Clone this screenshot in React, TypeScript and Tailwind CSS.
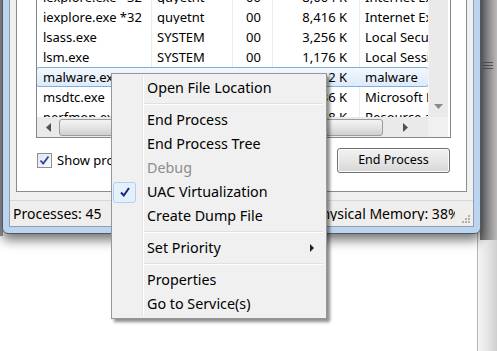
import React from 'react';

type Row = {
  name: string;
  user: string;
  cpu: string;
  mem: string;
  desc: string;
  selected?: boolean;
};

const rows: Row[] = [
  { name: 'iexplore.exe *32', user: 'quyetnt', cpu: '00', mem: '8,604 K', desc: 'Internet Explorer' },
  { name: 'iexplore.exe *32', user: 'quyetnt', cpu: '00', mem: '8,416 K', desc: 'Internet Explorer' },
  { name: 'lsass.exe', user: 'SYSTEM', cpu: '00', mem: '3,256 K', desc: 'Local Security Authority Process' },
  { name: 'lsm.exe', user: 'SYSTEM', cpu: '00', mem: '1,176 K', desc: 'Local Session Manager Service' },
  { name: 'malware.exe', user: 'quyetnt', cpu: '00', mem: '1,112 K', desc: 'malware', selected: true },
  { name: 'msdtc.exe', user: 'NETWORK...', cpu: '00', mem: '2,436 K', desc: 'Microsoft Distributed Transaction' },
  { name: 'perfmon.exe', user: 'quyetnt', cpu: '00', mem: '6,148 K', desc: 'Resource and Performance Monitor' },
];

type MenuItem =
  | { kind: 'sep' }
  | { kind: 'item'; label: string; disabled?: boolean; checked?: boolean; submenu?: boolean };

const menu: MenuItem[] = [
  { kind: 'item', label: 'Open File Location' },
  { kind: 'sep' },
  { kind: 'item', label: 'End Process' },
  { kind: 'item', label: 'End Process Tree' },
  { kind: 'item', label: 'Debug', disabled: true },
  { kind: 'item', label: 'UAC Virtualization', checked: true },
  { kind: 'item', label: 'Create Dump File' },
  { kind: 'sep' },
  { kind: 'item', label: 'Set Priority', submenu: true },
  { kind: 'sep' },
  { kind: 'item', label: 'Properties' },
  { kind: 'item', label: 'Go to Service(s)' },
];

const ProcessRow: React.FC<{ row: Row }> = ({ row }) => (
  <div
    className={
      row.selected
        ? 'grid grid-cols-[114px_81px_40px_87px_80px] h-5 items-center border border-[#84acdd] rounded-[3px] bg-gradient-to-b from-[#f2f7fd] to-[#dceafa] -mx-px'
        : 'grid grid-cols-[114px_81px_40px_87px_80px] h-5 items-center border border-transparent -mx-px'
    }
  >
    <span className="pl-[6px] whitespace-nowrap overflow-hidden">{row.name}</span>
    <span className="pl-[6px] whitespace-nowrap overflow-hidden">{row.user}</span>
    <span className="pl-[14px] whitespace-nowrap overflow-hidden">{row.cpu}</span>
    <span className="pr-[12px] text-right whitespace-nowrap overflow-hidden">{row.mem}</span>
    <span className="pl-[6px] whitespace-nowrap overflow-hidden">{row.desc}</span>
  </div>
);

const ContextMenu: React.FC = () => (
  <div className="absolute left-[111px] top-[73px] w-[216px] border border-[#979797] bg-[#f0f0f0] p-[2px] text-[14.3px] shadow-[3px_3px_3px_rgba(0,0,0,0.45)]">
    <div className="relative">
      {/* gutter line */}
      <div className="absolute left-[28px] top-0 bottom-0 w-[2px] border-l border-[#e2e3e3] bg-white" />
      {menu.map((m, i) =>
        m.kind === 'sep' ? (
          <div key={i} className="h-2 flex items-center pl-[30px] pr-[1px]">
            <div className="h-[2px] w-full border-t border-[#e0e0e0] bg-white" />
          </div>
        ) : (
          <div key={i} className="relative h-6 flex items-center">
            <div className="w-[28px] h-6 flex items-center justify-start">
              {m.checked && (
                <div className="w-[23px] h-[21px] ml-[-1px] rounded-[3px] border border-[#aecff7] bg-[#e6f0fb] flex items-center justify-center">
                  <svg width="12" height="12" viewBox="0 0 12 12">
                    <path d="M2 6.5 L4.8 9.5 L10 2" fill="none" stroke="#14287e" strokeWidth="2" />
                  </svg>
                </div>
              )}
            </div>
            <span className={m.disabled ? 'pl-[5px] pt-px text-[#8d8d8d]' : 'pl-[5px] pt-px text-black'}>{m.label}</span>
            {m.submenu && (
              <svg className="absolute right-[10px] top-[8px]" width="4" height="8" viewBox="0 0 4 8">
                <path d="M0 0 L4 4 L0 8 Z" fill="#222" />
              </svg>
            )}
          </div>
        )
      )}
    </div>
  </div>
);

const App: React.FC = () => {
  return (
    <div className="relative w-[497px] h-[351px] overflow-hidden bg-white text-[13px] leading-none text-black font-['Segoe_UI','Noto_Sans',sans-serif]">
      {/* desktop edge at left */}
      <div className="absolute left-0 top-0 w-[3px] h-[236px] bg-[#9a9a9a]" />
      {/* background window scrollbar on the right */}
      <div className="absolute left-[477px] top-0 w-[20px] h-[351px] border-l border-[#b5b5b5] bg-gradient-to-r from-[#f4f4f4] via-[#e6e6e6] to-[#cfcfcf]" />
      <div className="absolute left-[480px] top-0 w-[17px] h-[240px] bg-gradient-to-r from-[#6b6b6b] to-[#b8b8b8]" />
      <div className="absolute left-[483px] top-[62px] w-[10px] flex flex-col gap-[2px]">
        <div className="h-px bg-[#555]" />
        <div className="h-px bg-[#555]" />
        <div className="h-px bg-[#555]" />
      </div>

      {/* Task Manager window */}
      <div className="absolute left-[2px] top-[-40px] w-[479px] h-[274px] rounded-b-[6px] border border-[#4d5a6a] bg-[#bcd4ee] p-[6px] pt-0 shadow-[0_6px_12px_rgba(0,0,0,0.55)] flex flex-col">
        <div className="flex-1 flex flex-col border border-[#8aa0b9] bg-[#f0f0f0]">
          {/* tab page */}
          <div className="mx-[6px] h-[230px] border border-[#898c95] bg-white pl-[19px] pr-[15px] pt-[9px] flex flex-col">
            {/* list view */}
            <div className="h-[166px] border border-[#828790] flex flex-col">
              <div className="flex-1 flex overflow-hidden">
                <div className="relative w-[391px] overflow-hidden pt-[14px]">
                  {/* column separators */}
                  <div className="absolute left-[114px] top-0 bottom-0 w-px bg-[#ececec]" />
                  <div className="absolute left-[195px] top-0 bottom-0 w-px bg-[#ececec]" />
                  <div className="absolute left-[235px] top-0 bottom-0 w-px bg-[#ececec]" />
                  <div className="absolute left-[322px] top-0 bottom-0 w-px bg-[#ececec]" />
                  <div className="relative">
                    {rows.map((r, i) => (
                      <ProcessRow key={i} row={r} />
                    ))}
                  </div>
                </div>
                {/* vertical scrollbar */}
                <div className="w-[20px] bg-[#eaeaea] border-l border-[#f5f5f5] flex flex-col justify-end items-center pb-[8px]">
                  <svg width="9" height="5" viewBox="0 0 9 5">
                    <path d="M0 0 L9 0 L4.5 5 Z" fill="#8a8a8a" />
                  </svg>
                </div>
              </div>
              {/* horizontal scrollbar */}
              <div className="h-[20px] flex">
                <div className="w-[391px] bg-[#eaeaea] flex items-center">
                  <div className="w-[22px] flex justify-center">
                    <svg width="5" height="9" viewBox="0 0 5 9">
                      <path d="M5 0 L5 9 L0 4.5 Z" fill="#505050" />
                    </svg>
                  </div>
                  <div className="w-[324px] h-[17px] rounded-[3px] border border-[#9b9b9b] bg-gradient-to-b from-[#f3f3f3] via-[#e4e4e4] to-[#cfcfcf]" />
                  <div className="flex-1 flex justify-center">
                    <svg width="5" height="9" viewBox="0 0 5 9">
                      <path d="M0 0 L0 9 L5 4.5 Z" fill="#505050" />
                    </svg>
                  </div>
                </div>
                <div className="w-[20px] bg-[#f0f0f0]" />
              </div>
            </div>
            {/* bottom row */}
            <div className="mt-[10px] flex items-center justify-between">
              <div className="flex items-center gap-[5px] pl-[1px]">
                <div className="w-[15px] h-[15px] border border-[#8e8f8f] bg-gradient-to-br from-[#dfe8f4] to-[#f7f9fc] flex items-center justify-center">
                  <svg width="11" height="11" viewBox="0 0 11 11">
                    <path d="M1.5 5.5 L4.2 8.5 L9.5 1.5" fill="none" stroke="#2e4595" strokeWidth="1.8" />
                  </svg>
                </div>
                <span>Show processes from all users</span>
              </div>
              <button className="mr-px w-[113px] h-[25px] rounded-[3px] border border-[#707070] bg-gradient-to-b from-[#f2f2f2] via-[#e6e6e6] to-[#d6d6d6] shadow-[inset_0_0_0_1px_#fcfcfc] text-[12.5px] leading-none text-black">
                End Process
              </button>
            </div>
          </div>
          {/* status bar */}
          <div className="mt-[8px] flex-1 flex items-center bg-[#f0eeec] border-t border-[#d7d7d7] relative text-[14px]">
            <span className="pl-[3px] w-[150px] whitespace-nowrap">Processes: 45</span>
            <span className="w-[153px] whitespace-nowrap">CPU Usage: 2%</span>
            <div className="w-[142px] overflow-hidden whitespace-nowrap">Physical Memory: 38%</div>
            <svg className="absolute right-[2px] bottom-[2px]" width="10" height="10" viewBox="0 0 10 10">
              <g fill="#b0b0b0">
                <rect x="7" y="1" width="2" height="2" />
                <rect x="4" y="4" width="2" height="2" />
                <rect x="7" y="4" width="2" height="2" />
                <rect x="1" y="7" width="2" height="2" />
                <rect x="4" y="7" width="2" height="2" />
                <rect x="7" y="7" width="2" height="2" />
              </g>
            </svg>
          </div>
        </div>
      </div>

      <ContextMenu />
    </div>
  );
};

export default App;
